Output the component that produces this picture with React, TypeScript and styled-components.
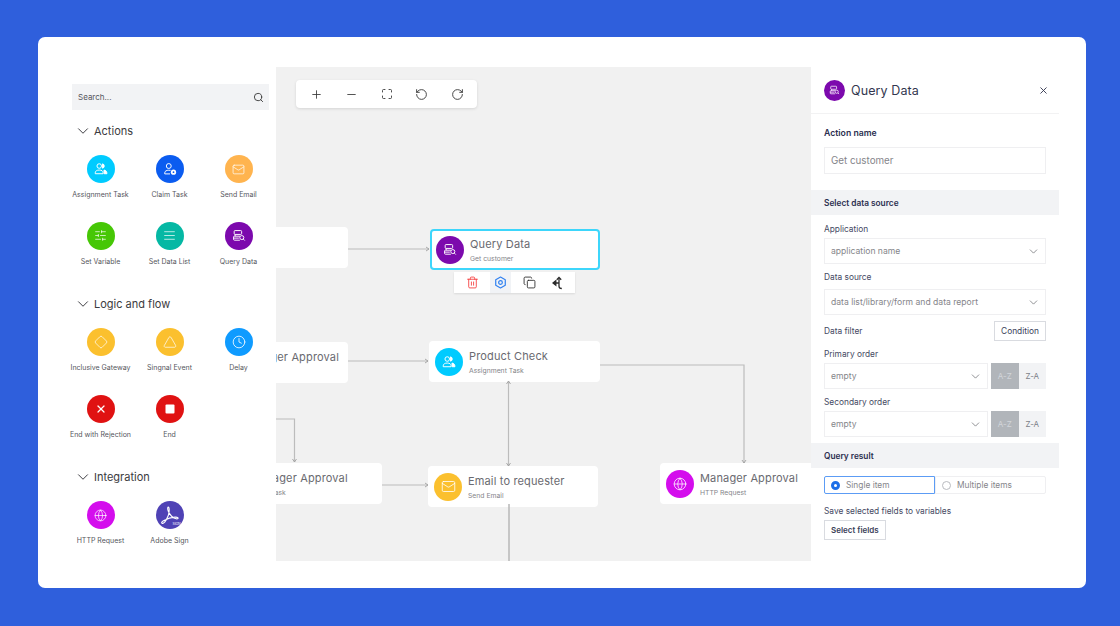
import type { ReactNode } from "react";
import styled, { createGlobalStyle } from "styled-components";
import {
  ChevronDown,
  Clock,
  Copy,
  Diamond,
  Globe,
  Mail,
  Maximize,
  Minus,
  Plus,
  RotateCcw,
  RotateCw,
  Search,
  SlidersHorizontal,
  Square,
  Trash2,
  Triangle,
  X,
  AlignJustify,
} from "lucide-react";

const GlobalStyle = createGlobalStyle`
  html, body {
    margin: 0;
    padding: 0;
    background: #2f5fdc;
    overflow: hidden;
  }
  * {
    box-sizing: border-box;
  }
  body {
    font-family: Inter, "Open Sans", "Liberation Sans", sans-serif;
  }
`;

const Page = styled.div`
  width: 1120px;
  height: 626px;
  padding: 37px 34px 38px 38px;
  background: #2f5fdc;
`;

const Card = styled.div`
  display: flex;
  width: 1048px;
  height: 551px;
  padding: 30px 27px 27px 28px;
  background: #ffffff;
  border-radius: 7px;
`;

/* left palette */
const Palette = styled.div`
  width: 210px;
  flex-shrink: 0;
  padding-top: 17px;
`;

const SearchBox = styled.div`
  display: flex;
  align-items: center;
  justify-content: space-between;
  width: 197px;
  height: 26px;
  margin-left: 6px;
  padding: 0 5px 0 6px;
  background: #f2f3f5;
  font-size: 8px;
  color: #55565c;
`;

const Section = styled.div`
  height: 173px;
  padding-top: 11px;
  margin-bottom: 0;
`;

const SectionHead = styled.div`
  display: flex;
  align-items: center;
  gap: 2px;
  height: 20px;
  padding-left: 8px;
  font-size: 11px;
  color: #3b3b40;
`;

const IconGrid = styled.div`
  display: grid;
  grid-template-columns: repeat(3, 69px);
  grid-auto-rows: 66.5px;
  padding-top: 14px;
`;

const PaletteItem = styled.div`
  display: flex;
  flex-direction: column;
  align-items: center;
  gap: 7px;
  font-size: 7px;
  line-height: 9px;
  color: #55565c;
  white-space: nowrap;
`;

const Disc = styled.div<{ $bg: string; $size?: number }>`
  display: flex;
  align-items: center;
  justify-content: center;
  flex-shrink: 0;
  width: ${({ $size }) => $size || 28}px;
  height: ${({ $size }) => $size || 28}px;
  border-radius: 50%;
  background: ${({ $bg }) => $bg};
  color: #ffffff;
`;

/* flow canvas */
const Canvas = styled.div`
  position: relative;
  width: 535px;
  height: 494px;
  flex-shrink: 0;
  overflow: hidden;
  background: #f1f1f1;
`;

const Wires = styled.svg`
  position: absolute;
  left: 0;
  top: 0;
`;

const Toolbar = styled.div`
  position: absolute;
  left: 20px;
  top: 13px;
  display: flex;
  align-items: center;
  justify-content: space-between;
  width: 181px;
  height: 28px;
  padding: 0 13.5px;
  background: #ffffff;
  border-radius: 4px;
  box-shadow: 0 1px 3px rgba(0, 0, 0, 0.12);
  color: #3a3a3a;
`;

const Node = styled.div<{
  $x: number;
  $y: number;
  $w: number;
  $active?: boolean;
}>`
  position: absolute;
  left: ${({ $x }) => $x}px;
  top: ${({ $y }) => $y}px;
  display: flex;
  align-items: center;
  gap: 6px;
  width: ${({ $w }) => $w}px;
  height: 41px;
  padding-left: ${({ $active }) => ($active ? 4 : 6)}px;
  background: #ffffff;
  border-radius: 4px;
  border: ${({ $active }) => ($active ? "2px solid #3dd6fb" : "none")};
`;

const NodeText = styled.div`
  display: flex;
  flex-direction: column;
  gap: 3px;
  margin-top: 1px;
  white-space: nowrap;
`;

const NodeTitle = styled.div`
  font-size: 11px;
  line-height: 13px;
  letter-spacing: 0.15px;
  color: #6a6a70;
`;

const NodeSub = styled.div`
  font-size: 6.8px;
  line-height: 9px;
  color: #85858a;
`;

const ActionBar = styled.div`
  position: absolute;
  left: 178px;
  top: 205px;
  display: flex;
  width: 121px;
  height: 21px;
  background: #ffffff;
  box-shadow: 0 1px 2px rgba(0, 0, 0, 0.1);
`;

const ActionCell = styled.div<{ $on?: boolean; $color: string; $w: number; $inset?: number }>`
  display: flex;
  align-items: center;
  justify-content: center;
  width: ${({ $w }) => $w}px;
  padding-right: ${({ $inset }) => $inset || 0}px;
  color: ${({ $color }) => $color};
  background: ${({ $on }) => ($on ? "#f1f3f6" : "transparent")};
`;

/* right inspector */
const Inspector = styled.div`
  width: 248px;
  flex-shrink: 0;
  color: #2c3050;
`;

const InspectorHead = styled.div`
  display: flex;
  align-items: center;
  gap: 6px;
  height: 47px;
  padding: 0 10px 0 13px;
  border-bottom: 1px solid #f2f2f3;
`;

const InspectorTitle = styled.div`
  flex: 1;
  font-size: 12.5px;
  letter-spacing: 0.1px;
  color: #33374f;
`;

const Label = styled.div<{ $mt: number; $strong?: boolean }>`
  margin: ${({ $mt }) => $mt}px 13px 0;
  font-size: ${({ $strong }) => ($strong ? 8.7 : 8.35)}px;
  line-height: 12px;
  font-weight: ${({ $strong }) => ($strong ? 600 : 400)};
  color: ${({ $strong }) => ($strong ? "#2c3050" : "#454963")};
`;

const Input = styled.div`
  display: flex;
  align-items: center;
  height: 27px;
  margin: 8px 13px 0;
  padding: 0 6px;
  border: 1px solid #efeff1;
  font-size: 9.8px;
  color: #85858a;
`;

const Band = styled.div<{ $mt: number }>`
  display: flex;
  align-items: center;
  height: 25px;
  margin-top: ${({ $mt }) => $mt}px;
  padding-left: 13px;
  background: #f2f3f5;
  font-size: 8.3px;
  font-weight: 600;
  color: #2c3050;
`;

const SelectBox = styled.div<{ $mt?: number }>`
  display: flex;
  align-items: center;
  justify-content: space-between;
  flex: 1;
  height: 26px;
  margin-top: ${({ $mt }) => $mt || 0}px;
  padding: 0 5px 0 6px;
  border: 1px solid #efeff1;
  font-size: 8.6px;
  color: #85858a;
`;

const Row = styled.div<{ $mt: number }>`
  display: flex;
  align-items: center;
  justify-content: space-between;
  gap: 3px;
  margin: ${({ $mt }) => $mt}px 13px 0;
`;

const RowLabel = styled.div`
  font-size: 8.35px;
  color: #454963;
`;

const GhostButton = styled.div<{ $strong?: boolean }>`
  display: flex;
  align-items: center;
  justify-content: center;
  height: 20px;
  padding: 0 6px;
  border: 1px solid #d9dbe0;
  border-bottom-width: 1.5px;
  font-size: ${({ $strong }) => ($strong ? 8 : 8.4)}px;
  font-weight: ${({ $strong }) => ($strong ? 600 : 400)};
  color: #3a3e58;
`;

const Sort = styled.div<{ $on?: boolean }>`
  display: flex;
  align-items: center;
  justify-content: center;
  width: 27.5px;
  height: 26px;
  font-size: 8px;
  color: ${({ $on }) => ($on ? "#d3d6da" : "#7c7f88")};
  background: ${({ $on }) => ($on ? "#b1b5ba" : "#f2f3f5")};
`;

const SortPair = styled.div`
  display: flex;
`;

const RadioGroup = styled.div`
  display: flex;
  height: 18px;
  margin: 8px 13px 0;
`;

const RadioCell = styled.div<{ $on?: boolean }>`
  display: flex;
  align-items: center;
  gap: 6px;
  width: 111px;
  padding-left: 6px;
  font-size: 8.35px;
  color: #85858a;
  border: 1px solid ${({ $on }) => ($on ? "#5c9cf5" : "#efeff1")};
  border-radius: ${({ $on }) => ($on ? "2px 0 0 2px" : "0 2px 2px 0")};
`;

const RadioDot = styled.span<{ $on?: boolean }>`
  flex-shrink: 0;
  width: 9px;
  height: 9px;
  border-radius: 50%;
  background: #ffffff;
  border: ${({ $on }) => ($on ? "3px solid #1d6fe8" : "1px solid #b9bbc0")};
`;

const QueryIcon = ({ size }: { size: number }) => (
  <svg width={size} height={size} viewBox="0 0 16 16" fill="none" stroke="currentColor" strokeWidth="1.1">
    <rect x="2.5" y="1.8" width="8.5" height="4.4" rx="1" />
    <path d="M9 8.200H2.800a1 1 0 0 0-1 1v2.600a1 1 0 0 0 1 1H9M1.800 10.400h6" />
    <path d="M3.600 6.200v2" />
    <circle cx="11.200" cy="9.800" r="2.300" />
    <path d="M13 11.600l1.600 1.600" />
  </svg>
);

const AssignIcon = ({ size }: { size: number }) => (
  <svg width={size} height={size} viewBox="0 0 16 16" fill="none" stroke="currentColor" strokeWidth="1.1">
    <circle cx="6" cy="4.600" r="2.600" />
    <path d="M9.800 2.100a2.600 2.600 0 0 1 0 5z" fill="currentColor" />
    <path d="M1.400 13.400v-1c0-2 1.800-3.200 4.600-3.200s4.400 1.200 4.400 3.200v1z" />
    <path d="M11.400 9.200c2 .3 3.400 1.600 3.400 4.200h-3.200c0-1.600-.2-3-.2-4.200z" fill="currentColor" />
  </svg>
);

const ClaimIcon = ({ size }: { size: number }) => (
  <svg width={size} height={size} viewBox="0 0 16 16" fill="none" stroke="currentColor" strokeWidth="1.1">
    <circle cx="6.600" cy="4.600" r="2.800" />
    <path d="M2 13.600v-1.200c0-2 2-3 4.600-3 .8 0 1.400.1 2 .2M2 13.600h6" />
    <circle cx="12" cy="11.600" r="3" fill="currentColor" stroke="none" />
    <circle cx="12" cy="11.600" r="1" fill="#0b5cf0" stroke="none" />
  </svg>
);

const AdobeIcon = () => (
  <svg width="26" height="26" viewBox="0 0 26 26" fill="none">
    <path
      d="M5 21.200c1.600 1 4-2.200 6.200-7.400 1-2.400 1.400-7.800.4-8.600-1-.6-1.200 1.600-.4 3.800 1.400 4 5 7.400 8 7.800 1.600.2 2.400-.6 1.600-1.200-1.400-1-7.400-.2-11.600 1.800C6 18.600 3.800 20.400 5 21.200z"
      stroke="#ffffff"
      strokeWidth="1.1"
    />
    <text x="15.500" y="22.500" fontSize="3.400" fill="#ffffff" fontFamily="Inter, sans-serif">
      SIGN
    </text>
  </svg>
);

const SplitIcon = () => (
  <svg width="14" height="14" viewBox="0 0 14 14" fill="none" stroke="currentColor" strokeWidth="1.3">
    <path d="M7 2v8.200c0 1.400.9 2.300 2.800 2.300M1.800 7H7" />
    <path d="M4.800 3.800 7 1.400l2.200 2.400" />
    <path d="M3.800 4.800 1 7l2.800 2.200z" fill="currentColor" />
  </svg>
);

const GearIcon = () => (
  <svg width="13" height="13" viewBox="0 0 12 12" fill="none" stroke="currentColor" strokeWidth="1.1">
    <path d="M6 1 10.400 3.400v5.200L6 11 1.600 8.600V3.400z" strokeLinejoin="round" />
    <circle cx="6" cy="6" r="1.700" />
  </svg>
);

const FLOW_ICON = 14;

const actions: [string, string, ReactNode][] = [
  ["Assignment Task", "#00cbff", <AssignIcon size={FLOW_ICON} />],
  ["Claim Task", "#0b5cf0", <ClaimIcon size={FLOW_ICON} />],
  ["Send Email", "#ffb44f", <Mail size={13} strokeWidth={1.3} />],
  ["Set Variable", "#46c706", <SlidersHorizontal size={13} strokeWidth={1.3} />],
  ["Set Data List", "#05b8a4", <AlignJustify size={13} strokeWidth={1.3} />],
  ["Query Data", "#7c09ad", <QueryIcon size={FLOW_ICON} />],
];

const logic: [string, string, ReactNode][] = [
  ["Inclusive Gateway", "#fbc02e", <Diamond size={14} strokeWidth={1.2} />],
  ["Singnal Event", "#fbc02e", <Triangle size={14} strokeWidth={1.2} />],
  ["Delay", "#0f9bff", <Clock size={14} strokeWidth={1.4} />],
  ["End with Rejection", "#e01212", <X size={12} strokeWidth={2.4} />],
  ["End", "#e01212", <Square size={12} strokeWidth={0} fill="#ffffff" />],
];

const integration: [string, string, ReactNode][] = [
  ["HTTP Request", "#d40ded", <Globe size={13} strokeWidth={1.3} />],
  ["Adobe Sign", "#4f42b5", <AdobeIcon />],
];

const PaletteSection = ({
  title,
  items,
}: {
  title: string;
  items: [string, string, ReactNode][];
}) => (
  <Section>
    <SectionHead>
      <ChevronDown size={18} strokeWidth={1.3} />
      {title}
    </SectionHead>
    <IconGrid>
      {items.map(([name, color, icon]) => (
        <PaletteItem key={name}>
          <Disc $bg={color}>{icon}</Disc>
          {name}
        </PaletteItem>
      ))}
    </IconGrid>
  </Section>
);

const Arrow = ({ d }: { d: string }) => (
  <path d={d} fill="none" stroke="#bcbcbc" strokeWidth="1.2" markerEnd="url(#tip)" />
);

const App = () => {
  return (
    <Page>
      <GlobalStyle />
      <Card>
        <Palette>
          <SearchBox>
            Search...
            <Search size={11} strokeWidth={2} color="#3a3a3a" />
          </SearchBox>
          <PaletteSection title="Actions" items={actions} />
          <PaletteSection title="Logic and flow" items={logic} />
          <PaletteSection title="Integration" items={integration} />
        </Palette>

        <Canvas>
          <Toolbar>
            <Plus size={13} strokeWidth={1.6} />
            <Minus size={13} strokeWidth={1.6} />
            <Maximize size={12} strokeWidth={1.8} />
            <RotateCcw size={13} strokeWidth={1.7} />
            <RotateCw size={13} strokeWidth={1.7} />
          </Toolbar>

          <Node $x={-96} $y={160} $w={168} />

          <Node $x={154} $y={162} $w={170} $active>
            <Disc $bg="#7c09ad">
              <QueryIcon size={FLOW_ICON} />
            </Disc>
            <NodeText>
              <NodeTitle>Query Data</NodeTitle>
              <NodeSub>Get customer</NodeSub>
            </NodeText>
          </Node>

          <ActionBar>
            <ActionCell $w={36} $color="#f63b3b">
              <Trash2 size={13} strokeWidth={1.6} />
            </ActionCell>
            <ActionCell $w={21} $color="#2f80f0" $on>
              <GearIcon />
            </ActionCell>
            <ActionCell $w={37} $color="#2a2a2a">
              <Copy size={13} strokeWidth={1.6} />
            </ActionCell>
            <ActionCell $w={27} $inset={6} $color="#2a2a2a">
              <SplitIcon />
            </ActionCell>
          </ActionBar>

          <Node $x={-75} $y={275} $w={147}>
            <Disc $bg="#00cbff" />
            <NodeText>
              <NodeTitle>Manager Approval</NodeTitle>
              <NodeSub>Task</NodeSub>
            </NodeText>
          </Node>

          <Node $x={153} $y={274} $w={171}>
            <Disc $bg="#00cbff">
              <AssignIcon size={FLOW_ICON} />
            </Disc>
            <NodeText>
              <NodeTitle>Product Check</NodeTitle>
              <NodeSub>Assignment Task</NodeSub>
            </NodeText>
          </Node>

          <Node $x={-85} $y={396} $w={191}>
            <Disc $bg="#00cbff" />
            <NodeText>
              <NodeTitle>HR Manager Approval</NodeTitle>
              <NodeSub>Assignment Task</NodeSub>
            </NodeText>
          </Node>

          <Node $x={152} $y={399} $w={170}>
            <Disc $bg="#fbc02e">
              <Mail size={15} strokeWidth={1.3} />
            </Disc>
            <NodeText>
              <NodeTitle>Email to requester</NodeTitle>
              <NodeSub>Send Email</NodeSub>
            </NodeText>
          </Node>

          <Node $x={384} $y={396} $w={170}>
            <Disc $bg="#d40ded">
              <Globe size={14} strokeWidth={1.3} />
            </Disc>
            <NodeText>
              <NodeTitle>Manager Approval</NodeTitle>
              <NodeSub>HTTP Request</NodeSub>
            </NodeText>
          </Node>

          <Wires width="535" height="494" viewBox="0 0 535 494">
            <defs>
              <marker
                id="tip"
                markerUnits="userSpaceOnUse"
                markerWidth="6"
                markerHeight="6"
                refX="5"
                refY="3"
                orient="auto-start-reverse"
              >
                <path d="M2 1 5 3 2 5" fill="none" stroke="#a0a0a0" strokeWidth="0.9" />
              </marker>
            </defs>
            <Arrow d="M72 182H153" />
            <Arrow d="M72 294H152" />
            <Arrow d="M324 298H468V396" />
            <Arrow d="M0 352H18.500V395" />
            <Arrow d="M106 418H152" />
            <path
              d="M232.500 314V399"
              stroke="#bcbcbc"
              strokeWidth="1.2"
              markerStart="url(#tip)"
              markerEnd="url(#tip)"
            />
            <path d="M233 437V494" stroke="#bcbcbc" strokeWidth="1.6" />
          </Wires>
        </Canvas>

        <Inspector>
          <InspectorHead>
            <Disc $bg="#7c09ad" $size={21}>
              <QueryIcon size={11} />
            </Disc>
            <InspectorTitle>Query Data</InspectorTitle>
            <X size={11} strokeWidth={2} color="#33374f" />
          </InspectorHead>

          <Label $mt={13} $strong>
            Action name
          </Label>
          <Input>Get customer</Input>

          <Band $mt={16}>Select data source</Band>

          <Label $mt={8}>Application</Label>
          <Row $mt={3}>
            <SelectBox>
              application name
              <ChevronDown size={13} strokeWidth={1.2} color="#55565c" />
            </SelectBox>
          </Row>

          <Label $mt={7}>Data source</Label>
          <Row $mt={6}>
            <SelectBox>
              data list/library/form and data report
              <ChevronDown size={13} strokeWidth={1.2} color="#55565c" />
            </SelectBox>
          </Row>

          <Row $mt={6}>
            <RowLabel>Data filter</RowLabel>
            <GhostButton>Condition</GhostButton>
          </Row>

          <Label $mt={7}>Primary order</Label>
          <Row $mt={3}>
            <SelectBox>
              empty
              <ChevronDown size={13} strokeWidth={1.2} color="#55565c" />
            </SelectBox>
            <SortPair>
              <Sort $on>A-Z</Sort>
              <Sort>Z-A</Sort>
            </SortPair>
          </Row>

          <Label $mt={7}>Secondary order</Label>
          <Row $mt={3}>
            <SelectBox>
              empty
              <ChevronDown size={13} strokeWidth={1.2} color="#55565c" />
            </SelectBox>
            <SortPair>
              <Sort $on>A-Z</Sort>
              <Sort>Z-A</Sort>
            </SortPair>
          </Row>

          <Band $mt={6}>Query result</Band>

          <RadioGroup>
            <RadioCell $on>
              <RadioDot $on />
              Single item
            </RadioCell>
            <RadioCell>
              <RadioDot />
              Multiple items
            </RadioCell>
          </RadioGroup>

          <Label $mt={11}>Save selected fields to variables</Label>
          <Row $mt={3}>
            <GhostButton $strong>Select fields</GhostButton>
          </Row>
        </Inspector>
      </Card>
    </Page>
  );
};

export default App;
